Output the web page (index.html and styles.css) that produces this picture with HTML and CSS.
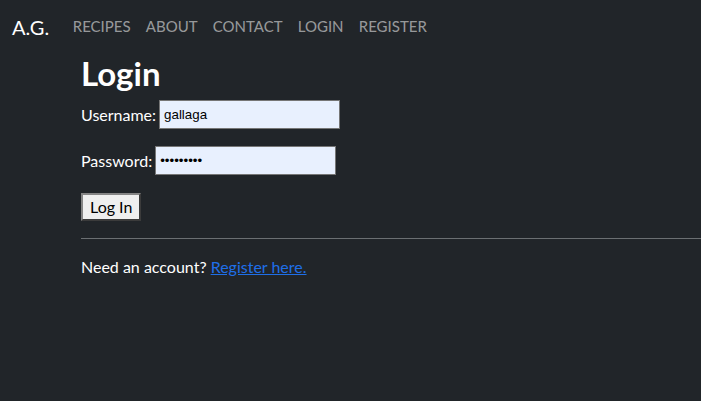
FILE: index.html
```html
<!DOCTYPE html>
<html>
<head>
<meta charset="utf-8">
<link rel="stylesheet" href="styles.css">
</head>
<body>
<nav class="navbar">
  <a class="brand" href="#">A.G.</a>
  <ul class="nav">
    <li><a href="#">RECIPES</a></li>
    <li><a href="#">ABOUT</a></li>
    <li><a href="#">CONTACT</a></li>
    <li><a href="#">LOGIN</a></li>
    <li><a href="#">REGISTER</a></li>
  </ul>
</nav>
<main class="content">
  <h1 class="title">Login</h1>
  <form class="form">
    <div class="row"><label>Username:</label> <input class="field" type="text" value="gallaga"></div>
    <div class="row"><label>Password:</label> <input class="field" type="password" value="gallagaaa"></div>
    <div class="row"><button class="btn" type="button">Log In</button></div>
  </form>
  <hr class="rule">
  <p class="note">Need an account? <a class="link" href="#">Register here.</a></p>
</main>
</body>
</html>
```
FILE: styles.css
```css
html, body { margin: 0; padding: 0; }
body {
  background: #212529;
  color: #fff;
  font-family: Lato, "Open Sans", sans-serif;
  font-size: 16px;
  line-height: 1.5;
  overflow: hidden;
}
.navbar {
  display: flex;
  align-items: center;
  height: 54px;
  padding: 0 12px 1px;
  box-sizing: border-box;
}
.brand {
  color: #fff;
  text-decoration: none;
  font-size: 20px;
  margin-right: 16px;
  padding: 4px 0;
}
.nav { display: flex; list-style: none; margin: 0; padding: 0; }
.nav a {
  display: block;
  padding: 8px 7.6px;
  color: rgba(255,255,255,0.55);
  text-decoration: none;
  font-size: 15px;
}
.content { padding-left: 81px; }
.title {
  font-size: 33px;
  font-weight: 700;
  line-height: 1.2;
  margin: 0 0 6px;
}
.form { margin: 0; }
.row { margin-bottom: 16px; display: flex; align-items: center; height: 30px; }
.row label { margin-right: 3px; }
.field {
  width: 181px;
  height: 29px;
  box-sizing: border-box;
  background: #e8f0fe;
  border: 1px solid #767676;
  font-family: Arial, "Liberation Sans", sans-serif;
  font-size: 13.33px;
  padding: 1px 4px;
  color: #000;
}
.btn {
  background: #efefef;
  border-style: solid;
  border-width: 2px;
  border-color: #858585 #3b3b3b #3b3b3b #858585;
  font-family: inherit;
  font-size: 16px;
  color: #000;
  padding: 1px 7px;
  height: 28px;
}
.rule {
  border: 0;
  border-top: 1px solid #8c8e91;
  margin: 1px 0 16px;
  opacity: 0.7;
}
.note { margin: 0; }
.link { color: #1f6fe8; }
```
